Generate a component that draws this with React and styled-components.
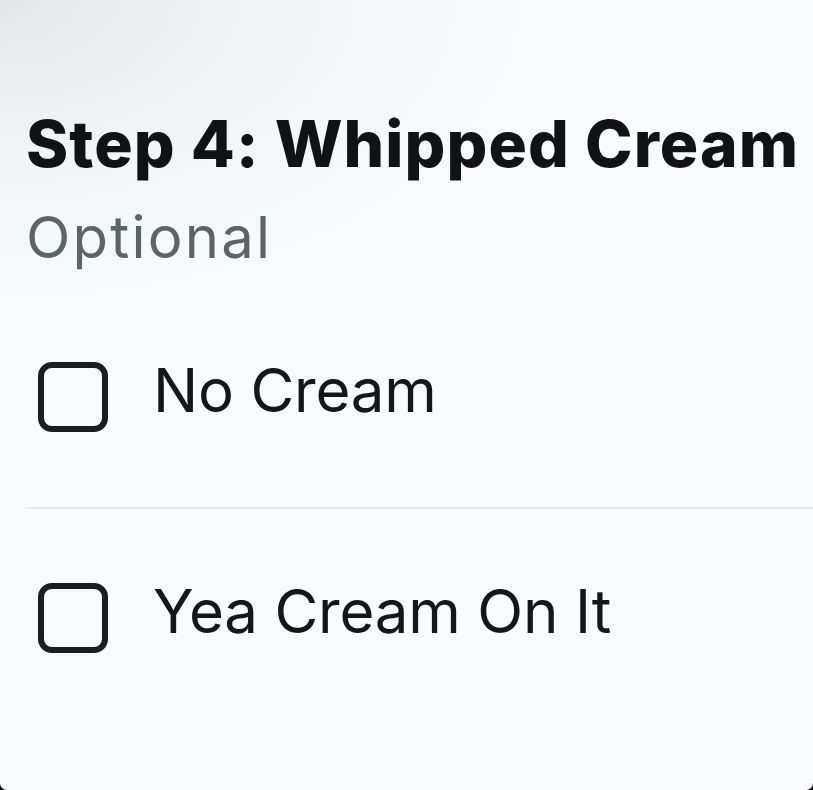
import React from "react";
import styled, { createGlobalStyle } from "styled-components";

const Global = createGlobalStyle`
  html, body { margin: 0; padding: 0; background: #0b0b0b; }
  #root { width: 813px; height: 790px; }
`;

const Card = styled.div`
  width: 813px;
  height: 790px;
  box-sizing: border-box;
  border-radius: 0 0 7px 7px;
  overflow: hidden;
  background:
    radial-gradient(ellipse 560px 320px at 0px 0px, #e3e6e7 0%, rgba(238,241,242,0.7) 45%, rgba(248,251,252,0) 100%),
    #f8fbfc;
  font-family: Inter, "Noto Sans", sans-serif;
  color: #16181a;
  padding-top: 112px;
`;

const Header = styled.div`
  padding-left: 26px;
`;

const Title = styled.h1`
  margin: 0;
  font-size: 64px;
  font-weight: 800;
  line-height: 64px;
  letter-spacing: 1.1px;
  color: #101213;
  white-space: nowrap;
`;

const Subtitle = styled.div`
  margin-top: 29px;
  font-size: 58px;
  line-height: 64px;
  font-weight: 400;
  color: #5c6465;
  letter-spacing: 2.2px;
`;

const List = styled.div`
  margin-top: 18px;
`;

const Option = styled.label`
  display: flex;
  align-items: center;
  gap: 45px;
  height: 220px;
  box-sizing: border-box;
  border-top: ${(p) => (p.$divider ? "2px solid #e6eaea" : "none")};
  margin-left: ${(p) => (p.$divider ? "25px" : "0")};
  padding-left: ${(p) => (p.$divider ? "13px" : "38px")};
`;

const Box = styled.span`
  width: 70px;
  height: 70px;
  box-sizing: border-box;
  border: 6px solid #1b1d1f;
  border-radius: 14px;
  flex: none;
`;

const Label = styled.span`
  font-size: 60px;
  line-height: 72px;
  margin-bottom: 14px;
  font-weight: 400;
  color: #141618;
  letter-spacing: -0.2px;
  white-space: nowrap;
`;

export default function App() {
  return (
    <>
      <Global />
      <Card>
        <Header>
          <Title>Step 4: Whipped Cream</Title>
          <Subtitle>Optional</Subtitle>
        </Header>
        <List>
          <Option>
            <Box />
            <Label>No Cream</Label>
          </Option>
          <Option $divider>
            <Box />
            <Label>Yea Cream On It</Label>
          </Option>
        </List>
      </Card>
    </>
  );
}
